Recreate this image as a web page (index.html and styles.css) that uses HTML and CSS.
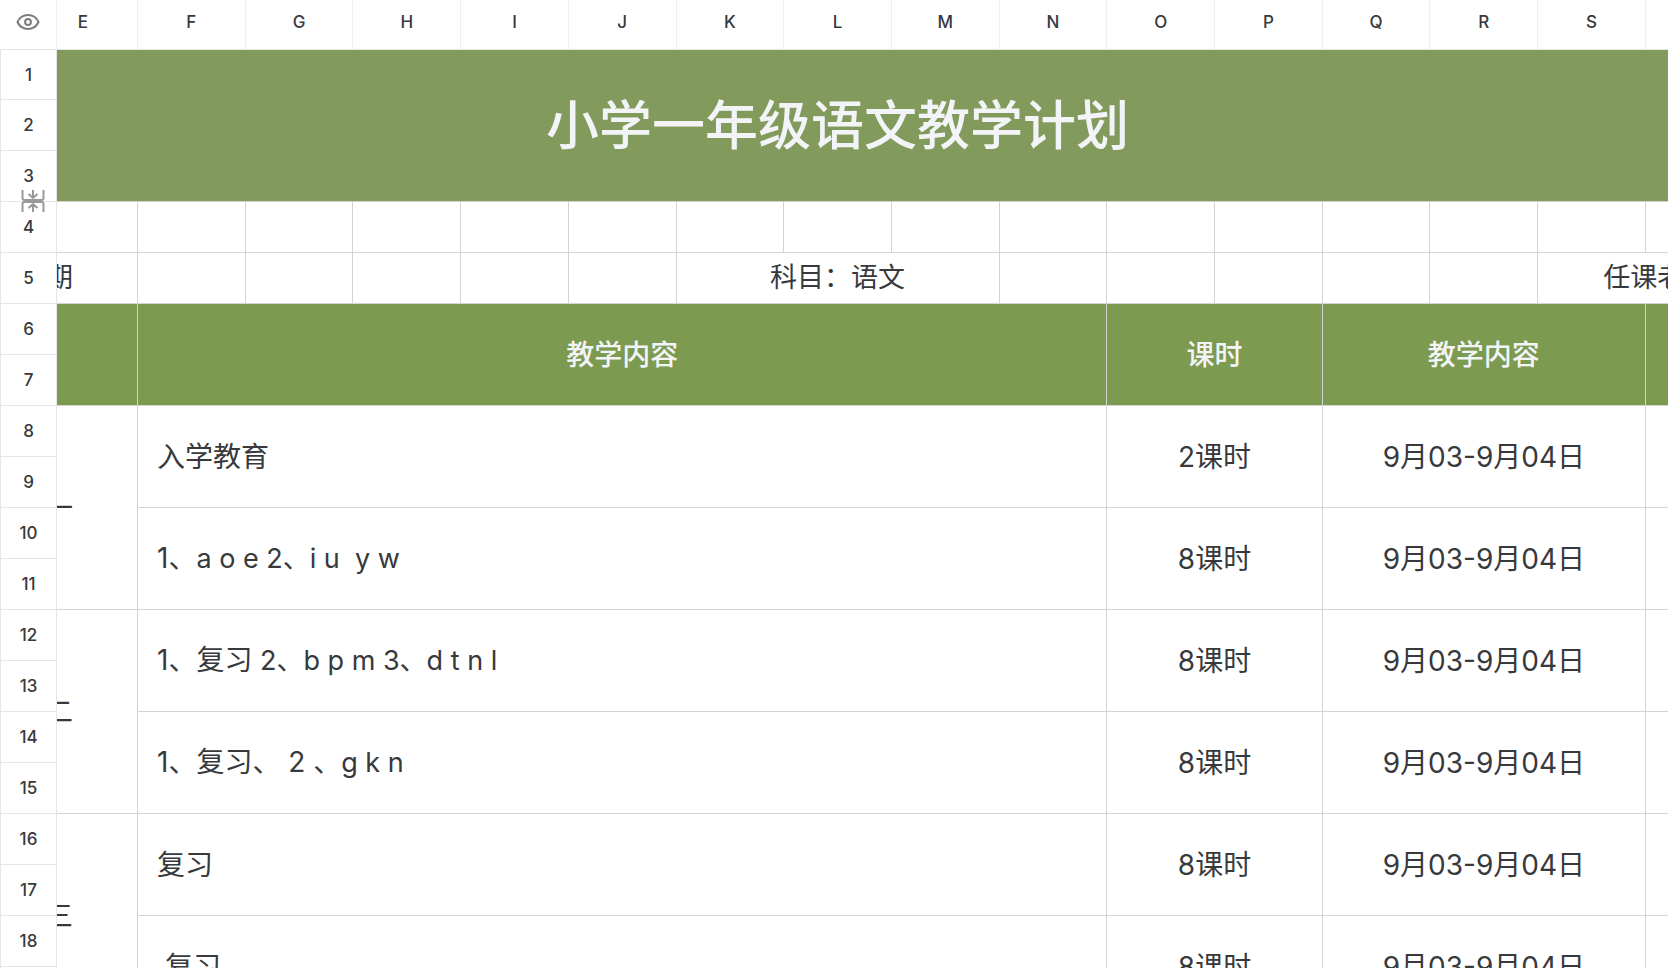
FILE: index.html
```html
<!DOCTYPE html>
<html lang="zh-CN">
<head>
<meta charset="utf-8">
<title>小学一年级语文教学计划</title>
<link rel="stylesheet" href="styles.css">
</head>
<body>
<main class="viewport">
<table class="sheet">
<colgroup><col class="col-index"><col class="col-first"><col span="14"><col class="col-last"></colgroup>
<thead>
<tr>
<th class="corner"><button class="eye" type="button" aria-label="显示"><svg width="24" height="18" viewBox="0 0 24 18" fill="none" stroke="#7c7c7c" stroke-width="2"><path d="M1.500 9C3.600 4.400 7.400 2 12 2s8.400 2.400 10.500 7C20.400 13.600 16.600 16 12 16S3.600 13.600 1.500 9Z"/><circle cx="12" cy="9" r="2.900"/></svg></button></th>
<th class="first" scope="col">E</th><th scope="col">F</th><th scope="col">G</th><th scope="col">H</th><th scope="col">I</th><th scope="col">J</th><th scope="col">K</th><th scope="col">L</th><th scope="col">M</th><th scope="col">N</th><th scope="col">O</th><th scope="col">P</th><th scope="col">Q</th><th scope="col">R</th><th scope="col">S</th><th></th>
</tr>
</thead>
<tbody>
<tr class="top"><th scope="row">1</th><td class="title" colspan="16" rowspan="3">小学一年级语文教学计划</td></tr>
<tr><th scope="row">2</th></tr>
<tr><th scope="row"><div class="marked">3<svg class="fold" width="24" height="24" viewBox="0 0 24 24" fill="none" stroke="#999" stroke-width="2"><path d="M1.500 1v8q0 2 2 2h17q2 0 2-2V1M1.500 23v-8q0-2 2-2h17q2 0 2 2v8M12 1v8M7.500 5l4.500 4 4.500-4M12 23v-8M7.500 19l4.500-4 4.500 4"/></svg></div></th></tr>
<tr><th scope="row">4</th><td></td><td></td><td></td><td></td><td></td><td></td><td></td><td></td><td></td><td></td><td></td><td></td><td></td><td></td><td></td><td></td></tr>
<tr class="info"><th scope="row">5</th><td><div class="cut">期</div></td><td></td><td></td><td></td><td></td><td></td><td colspan="3">科目：语文</td><td></td><td></td><td></td><td></td><td></td><td class="teacher" colspan="2">任课老师</td></tr>
<tr><th scope="row">6</th><td class="head" rowspan="2"></td><td class="head" colspan="9" rowspan="2">教学内容</td><td class="head" colspan="2" rowspan="2">课时</td><td class="head" colspan="3" rowspan="2">教学内容</td><td class="head" rowspan="2"></td></tr>
<tr><th scope="row">7</th></tr>
<tr><th scope="row">8</th><td rowspan="4"><div class="cut">一</div></td><td class="lesson" colspan="9" rowspan="2">入学教育</td><td colspan="2" rowspan="2">2课时</td><td colspan="3" rowspan="2">9月03-9月04日</td><td rowspan="2"></td></tr>
<tr><th scope="row">9</th></tr>
<tr><th scope="row">10</th><td class="lesson" colspan="9" rowspan="2">1、<span class="pinyin">a o e 2、i u&nbsp; y w</span></td><td colspan="2" rowspan="2">8课时</td><td colspan="3" rowspan="2">9月03-9月04日</td><td rowspan="2"></td></tr>
<tr><th scope="row">11</th></tr>
<tr><th scope="row">12</th><td rowspan="4"><div class="cut">二</div></td><td class="lesson" colspan="9" rowspan="2">1、复习<span class="pinyin"> 2、b p m 3、d t n l</span></td><td colspan="2" rowspan="2">8课时</td><td colspan="3" rowspan="2">9月03-9月04日</td><td rowspan="2"></td></tr>
<tr><th scope="row">13</th></tr>
<tr><th scope="row">14</th><td class="lesson" colspan="9" rowspan="2">1、复习、 2 、<span class="pinyin">g k n</span></td><td colspan="2" rowspan="2">8课时</td><td colspan="3" rowspan="2">9月03-9月04日</td><td rowspan="2"></td></tr>
<tr><th scope="row">15</th></tr>
<tr><th scope="row">16</th><td rowspan="4"><div class="cut">三</div></td><td class="lesson" colspan="9" rowspan="2">复习</td><td colspan="2" rowspan="2">8课时</td><td colspan="3" rowspan="2">9月03-9月04日</td><td rowspan="2"></td></tr>
<tr><th scope="row">17</th></tr>
<tr><th scope="row">18</th><td class="lesson" colspan="9" rowspan="2">&nbsp;复习</td><td colspan="2" rowspan="2">8课时</td><td colspan="3" rowspan="2">9月03-9月04日</td><td rowspan="2"></td></tr>
<tr><th scope="row">19</th></tr>
</tbody>
</table>
</main>
</body>
</html>
```
FILE: styles.css
```css
* {
  box-sizing: border-box;
}

body {
  margin: 0;
  background: #fff;
  color: #37393d;
  font-family: Inter, "Noto Sans CJK SC", sans-serif;
}

.viewport {
  height: 100vh;
  overflow: hidden;
}

.sheet {
  width: 100%;
  table-layout: fixed;
  border-collapse: separate;
  border-spacing: 0;
}

.col-index {
  width: 57px;
}

.col-first {
  width: 81px;
}

.col-last {
  width: 22px;
}

.sheet tr {
  height: 51px;
}

.sheet thead tr,
.sheet .top {
  height: 50px;
}

.sheet th {
  padding: 0;
  border-right: 1px solid #e6e6e6;
  border-bottom: 1px solid #e6e6e6;
  font-size: 17px;
  line-height: 24px;
  font-weight: 500;
}

.sheet thead th {
  padding-bottom: 6px;
  border-right-color: #eee;
}

.sheet tbody th {
  border-left: 1px solid #e6e6e6;
}

.sheet .first {
  padding-right: 28px;
}

.sheet td {
  padding: 0;
  overflow: hidden;
  border-right: 1px solid #d3d3d3;
  border-bottom: 1px solid #d3d3d3;
  font-size: 28px;
  line-height: 40px;
  text-align: center;
  white-space: nowrap;
}

.sheet td:last-child,
.sheet thead th:last-child {
  border-right: 0;
}

.sheet .title {
  padding-right: 50px;
  background: #829a5b;
  color: #f3f4f7;
  font-size: 53px;
  line-height: 72px;
  font-weight: 500;
}

.sheet .info td {
  font-size: 27px;
}

.sheet .teacher {
  padding-left: 65px;
  text-align: left;
}

.sheet .head {
  background: #7c9b51;
  color: #f3f4f7;
  font-weight: 500;
}

.sheet .lesson {
  padding-left: 19px;
  text-align: left;
}

.pinyin {
  font-size: 27px;
}

.cut {
  display: flex;
  justify-content: flex-end;
  padding-right: 64px;
}

.eye {
  display: block;
  margin: 0 auto;
  padding: 0;
  border: 0;
  background: none;
}

.eye svg {
  display: block;
}

.marked {
  position: relative;
}

.fold {
  position: absolute;
  left: 20px;
  top: 25px;
}
```
